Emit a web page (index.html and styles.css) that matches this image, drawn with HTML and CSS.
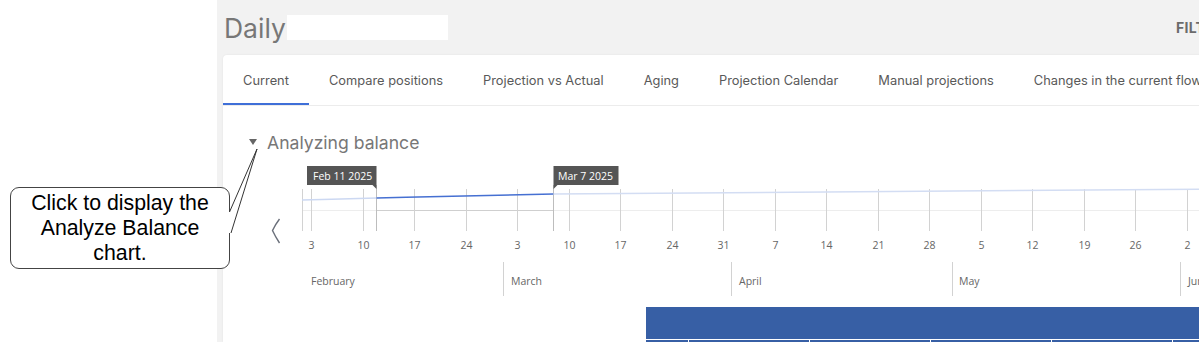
FILE: index.html
```html
<!DOCTYPE html>
<html lang="en">
<head>
  <meta charset="UTF-8">
  <meta name="viewport" content="width=device-width, initial-scale=1.0">
  <title>Daily</title>
  <link rel="stylesheet" href="styles.css">
</head>
<body>
  <div class="gutter"></div>

  <div class="main">
    <div class="top">
      <h1>Daily<span class="blank"></span></h1>
      <span class="filters">FILTERS</span>
    </div>

    <div class="card">
      <div class="tabs">
        <a class="tab active">Current</a>
        <a class="tab">Compare positions</a>
        <a class="tab">Projection vs Actual</a>
        <a class="tab">Aging</a>
        <a class="tab">Projection Calendar</a>
        <a class="tab">Manual projections</a>
        <a class="tab">Changes in the current flow</a>
      </div>

      <div class="content">
        <div class="section-head"><span class="caret"></span>Analyzing balance</div>

        <div class="chart-row">
          <svg class="prev" viewBox="0 0 12 26">
            <path d="M9.5 1 Q5 7 2.5 12.5 Q5 18 9.5 25" fill="none" stroke="#6a6f7a" stroke-width="1.4"/>
          </svg>

          <svg class="timeline" viewBox="0 0 903 140">
            <!-- base line -->
            <path d="M6 50.5H903" stroke="#ededed"/>
            <path d="M80.5 50.5H257.5" stroke="#cfcfcf"/>

            <!-- week ticks -->
            <path stroke="#d2d2d2" d="M6.5 29V71 M15.5 29V71 M67.5 29V71 M118.5 29V71 M170.5 29V71 M221.5 29V71 M273.5 29V71 M324.5 29V71 M376.5 29V71 M427.5 29V71 M479.5 29V71 M530.5 29V71 M582.5 29V71 M633.5 29V71 M685.5 29V71 M736.5 29V71 M788.5 29V71 M839.5 29V71 M891.5 29V71"/>

            <!-- selected range markers -->
            <path stroke="#bdbdbd" d="M80.5 25V71 M257.5 25V71"/>

            <!-- balance line -->
            <path d="M6 40 C30 39.5 60 38.6 80.5 38" fill="none" stroke="#ccd8f2" stroke-width="1.6"/>
            <path d="M80.5 38 C140 36.6 200 35.2 257.5 34" fill="none" stroke="#4670d2" stroke-width="1.6"/>
            <path d="M257.5 34 C400 32 600 30 903 29.2" fill="none" stroke="#d3ddf3" stroke-width="1.6"/>

            <!-- tooltips -->
            <rect x="11" y="6" width="69.5" height="19" fill="#555"/>
            <polygon points="76.5,25 80.5,25 80.5,29" fill="#555"/>
            <text class="tip" x="17" y="20">Feb 11 2025</text>
            <rect x="257.5" y="6" width="65" height="19" fill="#555"/>
            <polygon points="257.5,25 261.5,25 257.5,29" fill="#555"/>
            <text class="tip" x="262" y="20">Mar 7 2025</text>

            <!-- week labels -->
            <g class="axis" text-anchor="middle">
              <text x="15.5" y="89">3</text>
              <text x="67.5" y="89">10</text>
              <text x="118.5" y="89">17</text>
              <text x="170.5" y="89">24</text>
              <text x="221.5" y="89">3</text>
              <text x="273.5" y="89">10</text>
              <text x="324.5" y="89">17</text>
              <text x="376.5" y="89">24</text>
              <text x="427.5" y="89">31</text>
              <text x="479.5" y="89">7</text>
              <text x="530.5" y="89">14</text>
              <text x="582.5" y="89">21</text>
              <text x="633.5" y="89">28</text>
              <text x="685.5" y="89">5</text>
              <text x="736.5" y="89">12</text>
              <text x="788.5" y="89">19</text>
              <text x="839.5" y="89">26</text>
              <text x="891.5" y="89">2</text>
            </g>

            <!-- months -->
            <path stroke="#d2d2d2" d="M207.5 102V136 M435.5 102V136 M656.5 102V136 M884.5 102V136"/>
            <g class="axis">
              <text x="15" y="125">February</text>
              <text x="215" y="125">March</text>
              <text x="443" y="125">April</text>
              <text x="663" y="125">May</text>
              <text x="892" y="125">June</text>
            </g>
          </svg>
        </div>

        <div class="grid">
          <div class="grid-head"></div>
          <div class="grid-row">
            <div class="cell"></div>
            <div class="cell"></div>
            <div class="cell"></div>
            <div class="cell"></div>
            <div class="cell"></div>
            <div class="cell"></div>
            <div class="cell"></div>
          </div>
        </div>
      </div>
    </div>
  </div>

  <div class="callout">Click to display the<br>Analyze Balance<br>chart.</div>
  <svg class="callout-tail" viewBox="0 0 270 270">
    <polygon points="226,212 229.5,212 257,149 231,233 226,233" fill="#fff"/>
    <path d="M229.5 212 L257 149 L231 233" fill="none" stroke="#333" stroke-width="1"/>
  </svg>
</body>
</html>
```

FILE: styles.css
```css
body {
  margin: 0;
  display: flex;
  height: 100vh;
  overflow: hidden;
  background: #fff;
  font-family: Inter, "Noto Sans", sans-serif;
}
.gutter {
  flex: none;
  width: 217px;
}
.main {
  flex: none;
  width: 1035px;
  box-sizing: border-box;
  padding: 0 19px 0 6px;
  display: flex;
  flex-direction: column;
  background: #f2f2f2;
}
.top {
  height: 55px;
  display: flex;
  align-items: center;
  justify-content: space-between;
}
h1 {
  margin: 0 0 0 1px;
  display: flex;
  align-items: center;
  font-size: 26.5px;
  font-weight: 400;
  color: #777;
}
.blank {
  width: 161px;
  height: 25px;
  margin-left: 1px;
  background: #fff;
}
.filters {
  font-size: 14px;
  font-weight: 700;
  color: #6b6b6b;
  letter-spacing: 0.3px;
}
.card {
  flex: 1;
  overflow: hidden;
  background: #fff;
  border-radius: 4px 4px 0 0;
  box-shadow: 0 0 2px rgba(0, 0, 0, 0.08);
}
.tabs {
  display: flex;
  height: 50px;
  border-bottom: 1px solid #ececec;
  white-space: nowrap;
}
.tab {
  display: flex;
  align-items: center;
  padding: 2px 20px 0;
  font-size: 12.85px;
  color: #595959;
  border-bottom: 2px solid transparent;
}
.tab.active {
  border-bottom-color: #3f6fd8;
}
.content {
  padding-left: 26px;
}
.section-head {
  margin-top: 23px;
  height: 26px;
  display: flex;
  align-items: center;
  gap: 10px;
  font-size: 17.6px;
  color: #777;
}
.caret {
  width: 0;
  height: 0;
  border-left: 4.5px solid transparent;
  border-right: 4.5px solid transparent;
  border-top: 6px solid #666;
}
.chart-row {
  display: flex;
  margin-top: 5px;
  padding-left: 21px;
}
.prev {
  flex: none;
  width: 12px;
  height: 26px;
  margin-top: 58px;
}
.timeline {
  flex: none;
  width: 903px;
  height: 140px;
  margin-left: 14px;
}
.timeline text {
  font-family: "Open Sans", "DejaVu Sans", sans-serif;
  font-size: 10.5px;
}
.timeline .axis {
  fill: #666;
}
.timeline .tip {
  fill: #fff;
}
.grid {
  margin: 7px 0 0 397px;
}
.grid-head {
  width: 800px;
  height: 32px;
  background: #375fa5;
}
.grid-row {
  display: grid;
  grid-template-columns: 42px repeat(6, 120px);
  column-gap: 1px;
  margin-top: 1px;
}
.cell {
  height: 30px;
  background: #375fa5;
}
.callout {
  position: absolute;
  left: 10px;
  top: 187px;
  width: 220px;
  height: 82px;
  box-sizing: border-box;
  display: flex;
  align-items: center;
  justify-content: center;
  background: #fff;
  border: 1px solid #444;
  border-radius: 9px;
  font-family: "Liberation Sans", Arial, sans-serif;
  font-size: 21.3px;
  line-height: 25px;
  text-align: center;
  color: #000;
}
.callout-tail {
  position: absolute;
  left: 0;
  top: 0;
  width: 270px;
  height: 270px;
  pointer-events: none;
}
```
